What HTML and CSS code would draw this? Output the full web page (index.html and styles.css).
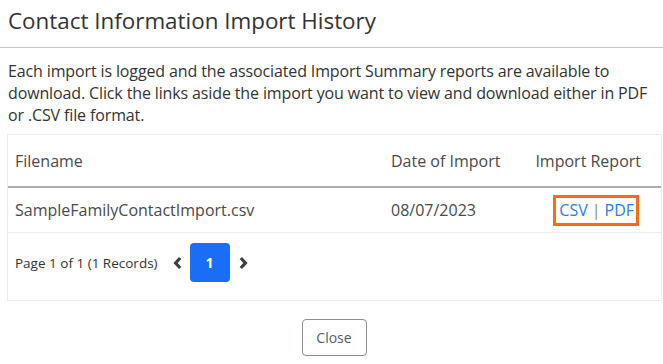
FILE: index.html
```html
<!DOCTYPE html>
<html>
<head>
<meta charset="utf-8">
<link rel="stylesheet" href="styles.css">
</head>
<body>
<div class="modal">
  <div class="modal-header">
    <h1 class="title">Contact Information Import History</h1>
  </div>
  <p class="intro">Each import is logged and the associated Import Summary reports are available to download. Click the links aside the import you want to view and download either in PDF or .CSV file format.</p>
  <div class="table-box">
    <table class="grid">
      <thead>
        <tr>
          <th class="col-file">Filename</th>
          <th class="col-date">Date of Import</th>
          <th class="col-report">Import Report</th>
        </tr>
      </thead>
      <tbody>
        <tr>
          <td class="col-file">SampleFamilyContactImport.csv</td>
          <td class="col-date">08/07/2023</td>
          <td class="col-report"><span class="links"><a class="link">CSV</a><span class="sep">|</span><a class="link">PDF</a></span></td>
        </tr>
      </tbody>
    </table>
    <div class="pager">
      <span class="pager-text">Page 1 of 1 (1 Records)</span>
      <span class="chev">
        <svg width="10" height="14" viewBox="0 0 10 14"><polyline points="7.2,2 2.6,7 7.2,12" fill="none" stroke="#3a3f45" stroke-width="3.2" stroke-linejoin="miter"/></svg>
      </span>
      <span class="page-btn">1</span>
      <span class="chev">
        <svg width="10" height="14" viewBox="0 0 10 14"><polyline points="2.8,2 7.4,7 2.8,12" fill="none" stroke="#3a3f45" stroke-width="3.2" stroke-linejoin="miter"/></svg>
      </span>
    </div>
  </div>
  <div class="footer">
    <button class="btn-close">Close</button>
  </div>
</div>
</body>
</html>
```

FILE: styles.css
```css
html, body {
  margin: 0;
  padding: 0;
  background: #ffffff;
}
body {
  font-family: "Open Sans", "Liberation Sans", sans-serif;
  color: #333333;
  width: 663px;
  height: 364px;
  overflow: hidden;
}
.modal-header {
  height: 47px;
  border-bottom: 1px solid #c4c4c4;
  display: flex;
  align-items: center;
}
.title {
  margin: 0;
  padding-left: 8px;
  font-size: 22.4px;
  font-weight: 400;
  color: #333333;
  line-height: 30px;
  position: relative;
  top: -3px;
}
.intro {
  margin: 12px 8px 0 8px;
  font-size: 16px;
  line-height: 22px;
  letter-spacing: -0.13px;
  color: #333333;
}
.table-box {
  margin: 8px 1px 0 7px;
  border: 1px solid #ececec;
  height: 165px;
}
.grid {
  width: 100%;
  border-collapse: collapse;
  font-size: 16px;
  color: #4a4a4a;
}
.grid th {
  font-weight: 400;
  text-align: left;
  height: 51px;
  padding: 0 0 0 7px;
  border-bottom: 2px solid #acacac;
  color: #4a4a4a;
}
.grid td {
  height: 44px;
  padding: 0 0 0 7px;
  border-bottom: 1px solid #ececec;
}
.grid .col-file {
  width: 369px;
}
.grid .col-date {
  width: 136px;
}
.grid .col-report {
  text-align: right;
  padding-right: 20px;
}
.grid td.col-report {
  padding-right: 22px;
}
.links {
  display: inline-flex;
  align-items: center;
  border: 3px solid #ff6a10;
  height: 25px;
  padding: 0 2px 0 3px;
  gap: 4px;
}
.link {
  color: #2b7de9;
}
.sep {
  color: #888888;
}
.pager {
  display: flex;
  align-items: center;
  padding: 10px 0 0 7px;
}
.pager-text {
  font-size: 13.5px;
  color: #333333;
  margin-right: 15px;
}
.chev {
  display: flex;
  align-items: center;
}
.page-btn {
  width: 40px;
  height: 39px;
  margin: 0 8px 0 7px;
  background: #1a6ef5;
  color: #ffffff;
  border-radius: 4px;
  font-size: 14px;
  font-weight: 700;
  display: flex;
  align-items: center;
  justify-content: center;
}
.footer {
  display: flex;
  justify-content: center;
  padding-top: 18px;
  padding-left: 5px;
}
.btn-close {
  width: 65px;
  height: 37px;
  border: 1px solid #8a8f96;
  border-radius: 4px;
  background: #ffffff;
  font-family: "Open Sans", "Liberation Sans", sans-serif;
  font-size: 14px;
  color: #555b63;
  padding: 0;
}
```
